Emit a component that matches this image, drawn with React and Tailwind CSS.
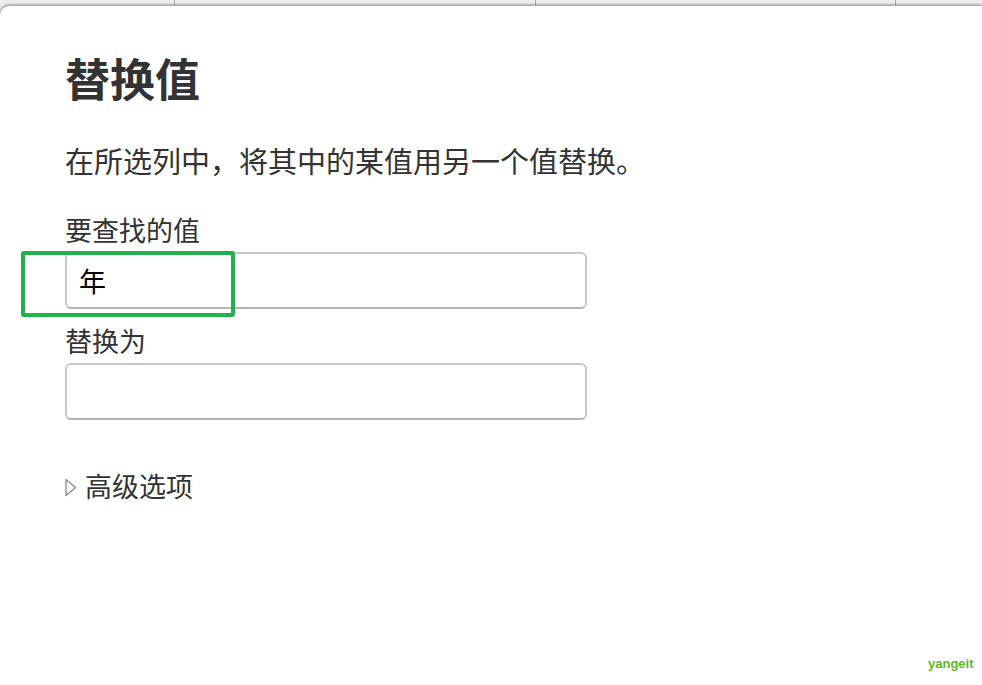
import React from 'react';

const font = { fontFamily: '"Noto Sans CJK SC", "Noto Sans", sans-serif' };

function Field({ label, value, highlight }) {
  return (
    <div className="flex flex-col">
      <label className="text-[27px] leading-[36px] text-[#333]">{label}</label>
      <div className="relative mt-[4px] w-[522px]">
        <input
          readOnly
          value={value}
          className="block h-[57px] w-full rounded-[6px] border-2 border-[#c8c8c8] border-b-[#b4b4b4] bg-white px-[12px] text-[27px] text-black outline-none"
        />
        {highlight && (
          <div className="pointer-events-none absolute left-[-44px] top-[-1px] h-[66px] w-[214px] rounded-[3px] border-[4px] border-[#22b14c]" />
        )}
      </div>
    </div>
  );
}

export default function App() {
  return (
    <div className="flex h-[685px] w-[982px] flex-col overflow-hidden bg-[#ececec]" style={font}>
      <div className="flex h-[5px] shrink-0">
        <div className="w-[175px] border-r border-[#a8a8a8]" />
        <div className="w-[361px] border-r border-[#a8a8a8]" />
        <div className="w-[360px] border-r border-[#a8a8a8]" />
        <div className="flex-1" />
      </div>
      <div className="flex-1 rounded-tl-[10px] border-t border-[#b0b0b0] bg-white pl-[65px] pt-[42px] shadow-[-1px_-1px_2px_rgba(0,0,0,0.25)]">
        <h1 className="text-[45px] font-bold leading-[60px] text-[#333]">替换值</h1>
        <p className="mt-[32px] text-[29px] leading-[40px] text-[#333]">在所选列中，将其中的某值用另一个值替换。</p>
        <div className="mt-[32px] flex flex-col gap-[14px]">
          <Field label="要查找的值" value="年" highlight />
          <Field label="替换为" value="" />
        </div>
        <div className="mt-[48px] flex items-center gap-[8px] text-[27px] leading-[36px] text-[#333]">
          <svg width="12" height="19" viewBox="0 0 12 19" className="mt-[2px]">
            <path d="M1 1.5 L10.5 9.5 L1 17.5 Z" fill="none" stroke="#8a8a8a" strokeWidth="1.3" strokeLinejoin="round" />
          </svg>
          <span>高级选项</span>
        </div>
        <div className="relative h-0">
          <span className="absolute left-[863px] top-[150px] text-[13px] font-bold text-[#5cb82a]" style={{ fontFamily: '"Liberation Sans", sans-serif' }}>
            yangeit
          </span>
        </div>
      </div>
    </div>
  );
}
